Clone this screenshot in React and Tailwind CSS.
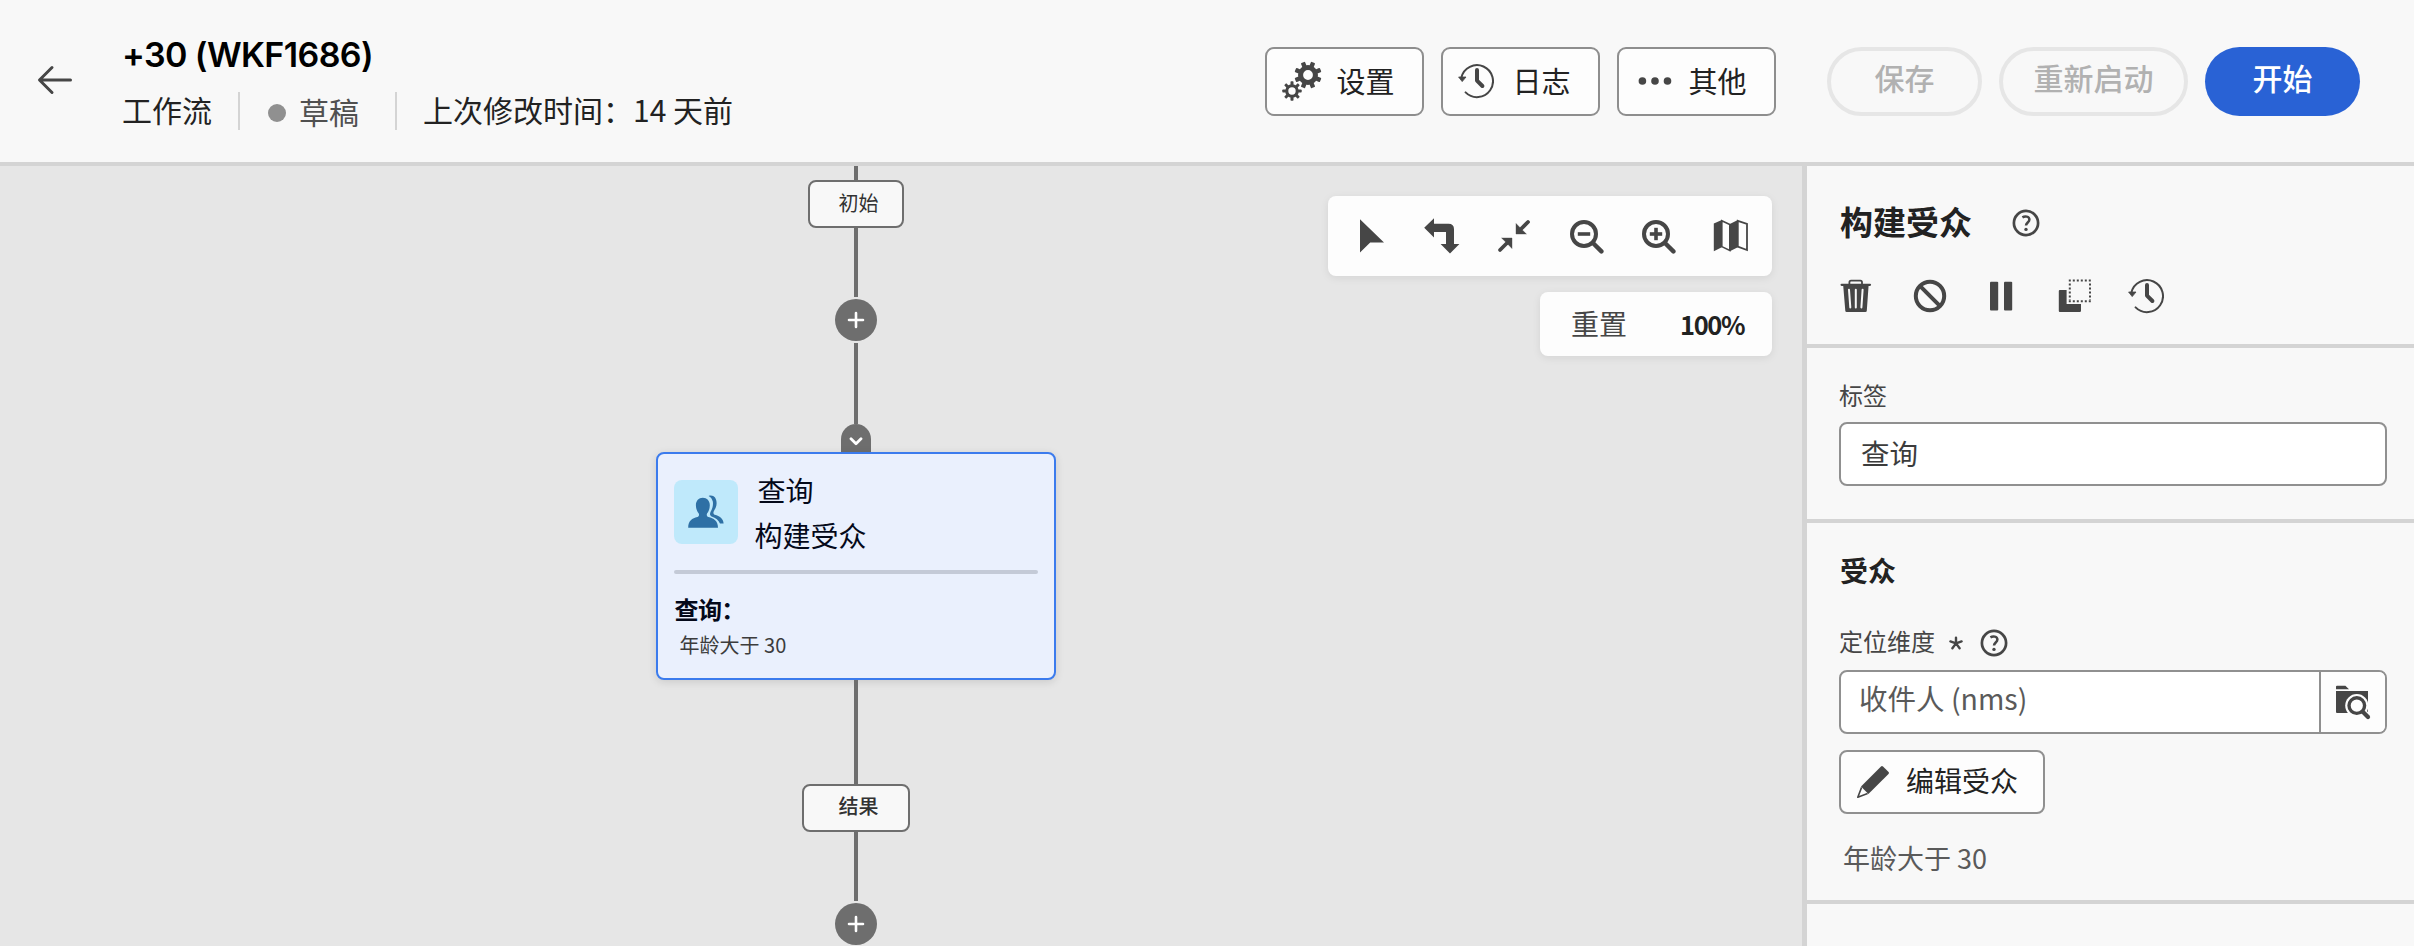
import React from "react";

const Back = () => (
  <svg width="36" height="30" viewBox="0 0 36 30" fill="none" stroke="#464646" strokeWidth="3" strokeLinecap="round" strokeLinejoin="round">
    <path d="M15 2.5 2.5 15 15 27.5M3 15H33.5" />
  </svg>
);

const Gear = ({ cx, cy, outer, body, hole, tooth, start }) => (
  <g>
    <circle cx={cx} cy={cy} r={(body + hole) / 2} fill="none" stroke="#464646" strokeWidth={body - hole} />
    {[0, 1, 2, 3, 4, 5, 6, 7].map((i) => (
      <rect key={i} x={cx - tooth / 2} y={cy - outer} width={tooth} height={outer - hole - 1} rx="0.8" fill="#464646" transform={`rotate(${start + i * 45} ${cx} ${cy})`} />
    ))}
  </g>
);

const Gears = () => (
  <svg width="40" height="40" viewBox="0 0 40 40">
    <Gear cx={26} cy={14} outer={13.6} body={10} hole={4.9} tooth={4.4} start={22.5} />
    <Gear cx={10} cy={30} outer={9.7} body={6.8} hole={3.7} tooth={3} start={0} />
  </svg>
);

const History = () => (
  <svg width="36" height="36" viewBox="0 0 36 36" fill="none" stroke="#464646">
    <path d="M3.4 14.5A16 16 0 1 1 7.6 29.4" strokeWidth="2" strokeLinecap="round" />
    <path d="M0.6 14h7.4L4.2 18.6z" fill="#464646" strokeWidth="0.8" strokeLinejoin="round" />
    <path d="M19 7V17.6L24.4 23" strokeWidth="4" strokeLinecap="round" strokeLinejoin="round" />
  </svg>
);

const More = () => (
  <svg width="34" height="10" viewBox="0 0 34 10" fill="#464646">
    <circle cx="4.4" cy="5" r="3.8" />
    <circle cx="17" cy="5" r="3.8" />
    <circle cx="29.5" cy="5" r="3.8" />
  </svg>
);

const Pointer = () => (
  <svg width="36" height="36" viewBox="0 0 36 36" fill="#464646">
    <path d="M6 1.2V34.6L16.2 24.6H30z" />
  </svg>
);

const Turn = () => (
  <svg width="36" height="36" viewBox="0 0 36 36" fill="#464646">
    <path d="M0.2 9.8 10 0.2V5.8H24.5Q30 5.8 30 11.3V26H35.4L26 35.4 16.6 26H22V14H10V19.6z" />
  </svg>
);

const Collapse = () => (
  <svg width="36" height="36" viewBox="0 0 36 36" fill="#464646" stroke="#464646">
    <path d="M20 5.5V16H30.4L26.8 12.6 23.4 9z" strokeWidth="0.4" />
    <path d="M32 4 25 11" strokeWidth="3.8" strokeLinecap="round" />
    <path d="M16 30.5V20H5.6L9.2 23.4 12.6 27z" strokeWidth="0.4" />
    <path d="M4 32 11 25" strokeWidth="3.8" strokeLinecap="round" />
  </svg>
);

const Zoom = ({ plus }) => (
  <svg width="36" height="36" viewBox="0 0 36 36" fill="none" stroke="#464646" strokeWidth="4">
    <circle cx="16" cy="16" r="12" />
    <path d="M25.2 25.2 33.4 33.4" strokeWidth="4.4" strokeLinecap="round" />
    <path d="M11.6 16H20.4" strokeLinecap="square" strokeWidth="3.6" />
    {plus && <path d="M16 11.6V20.4" strokeLinecap="square" strokeWidth="3.6" />}
  </svg>
);

const MapIcon = () => (
  <svg width="36" height="36" viewBox="0 0 36 36" fill="#464646">
    <path d="M1.8 5.6 9.8 2V29.2L1.8 33.2z" />
    <path d="M17.8 6 25.8 2V29.2L17.8 33.2z" />
    <path d="M9.8 2.8 17.8 6.6V32.4L9.8 28.6z" fill="none" stroke="#464646" strokeWidth="1.6" />
    <path d="M25.8 2.8 35 6V32L25.8 28.6z" fill="none" stroke="#464646" strokeWidth="1.8" />
  </svg>
);

const Help = () => (
  <svg width="28" height="28" viewBox="0 0 28 28" fill="none" stroke="#464646">
    <circle cx="14" cy="14" r="12.1" strokeWidth="2.7" />
    <path d="M10.4 8.3C12.8 6.9 17.4 7.1 17.4 10.6 17.4 13.4 14 13.7 14 16.6" strokeWidth="2.5" />
    <circle cx="14" cy="20.4" r="1.7" fill="#464646" stroke="none" />
  </svg>
);

const Trash = () => (
  <svg width="32" height="34" viewBox="0 0 32 34" fill="none" stroke="#464646">
    <path d="M9.4 5V3.2Q9.4 1.6 11 1.6H20.4Q22 1.6 22 3.2V5" strokeWidth="1.8" />
    <path d="M1.6 5.8H30" strokeWidth="2.2" strokeLinecap="round" />
    <path d="M3.2 6.6H28.6L26.8 31.8Q26.7 33 25.4 33H6.6Q5.4 33 5.3 31.8z" fill="#464646" stroke="none" />
    <path d="M9 10.8 10.3 28.4M15.8 10.8V28.4M22.6 10.8 21.4 28.4" stroke="#f8f8f8" strokeWidth="2" strokeLinecap="round" />
  </svg>
);

const Ban = () => (
  <svg width="34" height="34" viewBox="0 0 34 34" fill="none" stroke="#464646" strokeWidth="4">
    <circle cx="17" cy="17" r="14.2" />
    <path d="M7.4 7.4 26.6 26.6" />
  </svg>
);

const Pause = () => (
  <svg width="24" height="30" viewBox="0 0 24 30" fill="#464646">
    <rect x="1" y="0.8" width="8.2" height="28.6" rx="1" />
    <rect x="15" y="0.8" width="8.2" height="28.6" rx="1" />
  </svg>
);

const Copy = () => (
  <svg width="34" height="34" viewBox="0 0 34 34" fill="#464646">
    <path d="M1.8 11H8.6V25H23V31.8Q23 33 21.8 33H1.8Q0.8 33 0.8 32V12Q0.8 11 1.8 11z" />
    <path d="M10.8 1.4H33M10.8 22.2H33" stroke="#464646" strokeWidth="2" strokeDasharray="2 2" />
    <path d="M11.8 4.4V21M32 4.4V21" stroke="#464646" strokeWidth="2" strokeDasharray="2 2" />
  </svg>
);

const People = () => (
  <svg width="36" height="36" viewBox="0 0 36 36" fill="#2e70a5">
    <path d="M20.6 1.9C25.6 0.4 28.8 4 28.6 9.4 28.5 13.4 26.6 15.6 25.7 17.4 25.1 18.8 25.4 20 26.8 20.8 31.6 22.4 35.4 24.4 35.6 29.6H32C30.6 26 27.8 24 23.6 22.4 21.6 21.4 21.8 19.6 22.6 17.8 24.4 14.4 25.4 11.4 24.8 7.6 24.3 5 22.8 3.2 20.6 1.9z" />
    <path d="M14.8 3.8C19 3.8 21.9 6.9 21.8 11.5 21.7 15 20.6 17.4 19.2 19.2 18.4 20.4 18.6 22.4 20.4 23 25.6 24.2 30 26.6 30 33.8H0.2C0.2 26.6 4.2 24.2 9.4 23 11.2 22.4 11.4 20.4 10.6 19.2 9.2 17.4 8 15 7.9 11.5 7.8 6.9 10.6 3.8 14.8 3.8z" />
  </svg>
);

const FolderSearch = () => (
  <svg width="36" height="36" viewBox="0 0 36 36" fill="#464646">
    <path d="M1 4.6V2.8Q1 1.8 2 1.8H10.4L14 5.2H1zM1 7H33V29H2Q1 29 1 28z" />
    <circle cx="21.8" cy="21.6" r="11.6" fill="#fdfdfd" />
    <path d="M28.4 28.4 34 34.6" stroke="#fdfdfd" strokeWidth="7" />
    <circle cx="21.8" cy="21.6" r="7.8" fill="#fdfdfd" stroke="#464646" strokeWidth="3.4" />
    <path d="M27.8 27.8 33 33" stroke="#464646" strokeWidth="4.2" strokeLinecap="round" />
  </svg>
);

const Pencil = () => (
  <svg width="34" height="34" viewBox="0 0 34 34" fill="#464646">
    <path d="M25 1.4Q26 0.6 27 1.5L32.6 7Q33.4 8 32.5 9L12.4 29 5 21.6z" />
    <path d="M5.6 22.4 1.8 32.2 11.6 28.4" fill="none" stroke="#464646" strokeWidth="1.6" strokeLinejoin="round" />
  </svg>
);

const Asterisk = () => (
  <svg width="14" height="14" viewBox="0 0 14 14" stroke="#464646" strokeWidth="2.4" strokeLinecap="round">
    <path d="M7 7.4V1.6M7 7.4 12.6 5.4M7 7.4 10.6 12.2M7 7.4 3.4 12.2M7 7.4 1.4 5.4" />
  </svg>
);

const Line = ({ className }) => <div className={`w-1 shrink-0 bg-[#6e6e6e] ${className}`} />;

const Add = () => (
  <div className="my-0.5 flex size-[42px] shrink-0 items-center justify-center rounded-full bg-[#6e6e6e]">
    <svg width="18" height="18" viewBox="0 0 18 18" stroke="#fff" strokeWidth="2.6" strokeLinecap="round">
      <path d="M9 2V16M2 9H16" />
    </svg>
  </div>
);

const ActionButton = ({ icon, label }) => (
  <button className="flex h-[69px] w-[159px] items-center rounded-[9px] border-2 border-[#8e8e8e] bg-[#fdfdfd] pb-0.5">
    <span className="w-[70px] shrink-0 pl-[15px]">{icon}</span>
    <span className="-mt-0.5 text-[29px] leading-10 text-[#222222]">{label}</span>
  </button>
);

export default function App() {
  return (
    <div className="flex h-[946px] w-[2414px] flex-col overflow-hidden bg-[#f8f8f8] font-['Noto_Sans_CJK_SC','Noto_Sans',sans-serif] text-[#222222]">
      <header className="flex h-[166px] shrink-0 border-b-4 border-[#d4d4d4]">
        <div className="mt-[65px] ml-[37px] w-[85px]">
          <Back />
        </div>
        <div className="w-[1142.6px] pt-[34px]">
          <h1 className="font-['Inter','Liberation_Sans',sans-serif] text-[34px] leading-[42px] font-semibold tracking-[-0.6px] text-black">+30 (WKF1686)</h1>
          <div className="mt-4 flex h-[38px] items-center text-[30px] leading-[38px] whitespace-nowrap">
            <span className="-mt-1">工作流</span>
            <span className="ml-[26px] h-[38px] w-0.5 bg-[#d4d4d4]" />
            <span className="mt-1 ml-7 size-[18px] rounded-full bg-[#909090]" />
            <span className="ml-[13px] text-[#505050]">草稿</span>
            <span className="ml-9 h-[38px] w-0.5 bg-[#d4d4d4]" />
            <span className="-mt-1 ml-[26px]">上次修改时间：14 天前</span>
          </div>
        </div>
        <div className="mt-[47px] flex h-[69px] gap-[17px]">
          <ActionButton icon={<Gears />} label="设置" />
          <ActionButton icon={<History />} label="日志" />
          <ActionButton icon={<span className="block pl-1"><More /></span>} label="其他" />
        </div>
        <div className="mt-[47px] ml-[51.4px] flex h-[69px] gap-[17px] text-[30px] leading-9 font-medium">
          <button className="h-[69px] w-[155px] rounded-full border-4 border-[#e6e6e6] pb-2.5 text-[#b1b1b1]">保存</button>
          <button className="h-[69px] w-[189px] rounded-full border-4 border-[#e6e6e6] pb-2.5 text-[#b1b1b1]">重新启动</button>
          <button className="h-[69px] w-[155px] rounded-full bg-[#2962d5] pb-2.5 text-white">开始</button>
        </div>
      </header>

      <div className="flex min-h-0 flex-1">
        <main className="flex w-[1802px] shrink-0 bg-[#e6e6e6] pl-[655.6px]">
          <div className="flex w-[400px] shrink-0 flex-col items-center">
            <Line className="h-3.5" />
            <div className="flex h-12 w-24 shrink-0 items-center rounded-lg border-2 border-[#6e6e6e] bg-[#f8f8f8] pb-0.5 pl-[29px] text-xl leading-7 text-[#323232]">初始</div>
            <Line className="h-[69px]" />
            <Add />
            <Line className="h-[81px]" />
            <div className="flex h-7 w-[30px] shrink-0 justify-center rounded-t-[15px] bg-[#6e6e6e] pt-[13px]">
              <svg width="14" height="9" viewBox="0 0 14 9" fill="none" stroke="#fff" strokeWidth="2.8" strokeLinecap="round" strokeLinejoin="round">
                <path d="M2 1.8 7 6.8 12 1.8" />
              </svg>
            </div>
            <section className="h-[228px] w-[400px] shrink-0 rounded-lg border-2 border-[#3b7bed] bg-[#eaf0fd] px-4 pt-5 text-[#04091a] shadow-[0_2px_8px_rgba(0,0,0,0.12)]">
              <div className="flex h-24">
                <div className="mt-1.5 flex size-16 items-center justify-center rounded-lg bg-[#bfe9fb]">
                  <People />
                </div>
                <div className="ml-[17px] pt-px text-[28px]">
                  <div className="pl-[3px] leading-[30px]">查询</div>
                  <div className="mt-[15px] leading-[31px]">构建受众</div>
                </div>
              </div>
              <div className="h-1 rounded-full bg-[#c4cad7]" />
              <div className="mt-[18px] pl-px text-2xl leading-[34px] font-bold tracking-[-0.7px]">查询：</div>
              <div className="mt-1 pl-1.5 text-xl leading-[30px] text-[#3c3c3c]">年龄大于 30</div>
            </section>
            <Line className="h-[104px]" />
            <div className="flex h-12 w-[108px] shrink-0 items-center rounded-lg border-2 border-[#6e6e6e] bg-[#f8f8f8] pb-1 pl-[35px] text-xl leading-7 font-medium text-[#323232]">结果</div>
            <Line className="h-[69px]" />
            <Add />
          </div>
          <div className="ml-auto flex flex-col items-end gap-4 pt-[30px] pr-[30px]">
            <div className="flex h-20 w-[444px] items-center gap-9 rounded-lg bg-[#fdfdfd] pl-[26px] shadow-[0_2px_8px_rgba(0,0,0,0.08)]">
              <span className="-mr-0.5"><Pointer /></span>
              <Turn />
              <Collapse />
              <Zoom />
              <Zoom plus />
              <MapIcon />
            </div>
            <div className="flex h-16 w-[232px] items-center rounded-lg bg-[#fdfdfd] pl-[31px] shadow-[0_2px_8px_rgba(0,0,0,0.08)]">
              <span className="-mt-0.5 w-[109px] text-[28px] leading-9 text-[#464646]">重置</span>
              <span className="text-[25.5px] leading-9 font-bold tracking-[-1.4px] text-[#222222]">100%</span>
            </div>
          </div>
        </main>

        <aside className="flex w-[612px] flex-col border-l-[5px] border-[#d4d4d4]">
          <section className="h-[182px] border-b-4 border-[#d4d4d4] pt-[35px] pl-[33px]">
            <div className="flex h-11 items-center">
              <h2 className="-mt-1 w-[172px] text-[33px] leading-10 font-bold">构建受众</h2>
              <Help />
            </div>
            <div className="mt-[33px] flex h-9 items-center">
              <span className="w-[73px]"><Trash /></span>
              <span className="w-[76px]"><Ban /></span>
              <span className="w-[69px]"><Pause /></span>
              <span className="w-[70px]"><Copy /></span>
              <History />
            </div>
          </section>
          <section className="h-[175px] border-b-4 border-[#d4d4d4] pt-[31px] pl-8">
            <div className="text-2xl leading-8 text-[#464646]">标签</div>
            <div className="mt-[11px] flex h-16 w-[548px] items-center rounded-lg border-2 border-[#909090] bg-white pb-[3px] pl-5 text-[28.5px] leading-9 text-[#3c3c3c]">查询</div>
          </section>
          <section className="h-[381px] border-b-4 border-[#d4d4d4] pt-[27px] pl-8">
            <h3 className="pl-px text-[28px] leading-10 font-bold">受众</h3>
            <div className="mt-[37px] flex h-8 items-center text-2xl leading-8 text-[#464646]">
              <span className="-mt-1 w-[110px]">定位维度</span>
              <Asterisk />
              <span className="ml-[17px]"><Help /></span>
            </div>
            <div className="mt-[11px] flex h-16 w-[548px] overflow-hidden rounded-lg border-2 border-[#909090] bg-white">
              <div className="flex flex-1 items-center pb-2 pl-[18px] text-[28.5px] leading-9 text-[#5a5a5a]">收件人 (nms)</div>
              <div className="flex w-[66px] items-center justify-center border-l-2 border-[#909090] bg-[#fdfdfd]">
                <FolderSearch />
              </div>
            </div>
            <button className="mt-4 flex h-16 w-[206px] items-center rounded-lg border-2 border-[#909090] bg-[#fdfdfd] pl-[15px] text-[28px] leading-9 text-[#222222]">
              <Pencil />
              <span className="-mt-1 ml-4">编辑受众</span>
            </button>
            <div className="mt-6 pl-1 text-[27px] leading-10 text-[#5a5a5a]">年龄大于 30</div>
          </section>
        </aside>
      </div>
    </div>
  );
}
